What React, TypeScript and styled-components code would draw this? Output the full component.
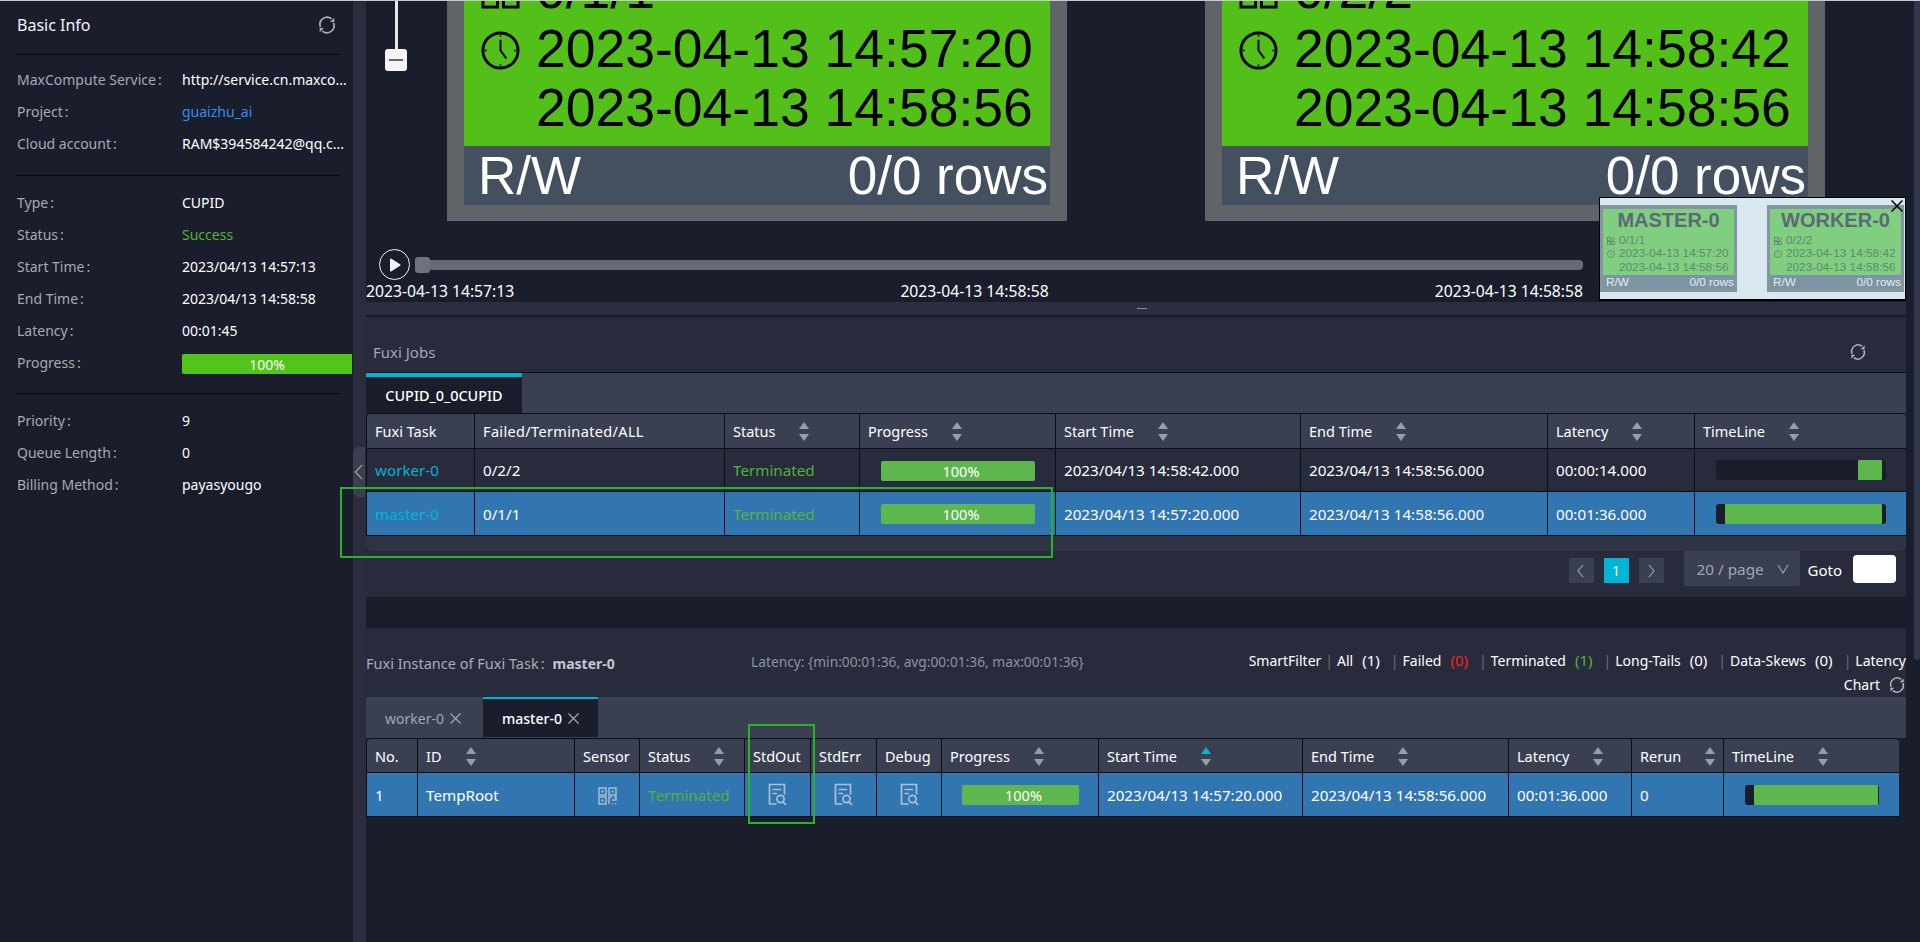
import React from "react";
import styled, { createGlobalStyle } from "styled-components";

const Global = createGlobalStyle`
  html, body { margin: 0; padding: 0; background: #1a1d2b; height: 100%; overflow: hidden; }
  #root { height: 100%; }
  * { box-sizing: border-box; }
  body { font-family: "Noto Sans", "Open Sans", "Liberation Sans", sans-serif; font-size: 14.5px; color: #fff; }
`;

const Page = styled.div`
  display: flex; height: 942px; width: 1920px; overflow: hidden; position: relative;
  background: #1a1d2b; border-top: 1px solid #c9c9c9;
`;

/* ---------- icons ---------- */
const RefreshIcon = ({ size = 18, color = "#b4b6bc" }: { size?: number; color?: string }) => (
  <svg width={size} height={size} viewBox="0 0 24 24" fill="none" stroke={color} strokeWidth="2">
    <path d="M4.2 14.5A8.6 8.6 0 0 1 17.6 4.6" />
    <path d="M19.8 9.5A8.6 8.6 0 0 1 6.4 19.4" />
    <path d="M20.8 3.2v5.2h-5.2z" fill={color} stroke="none" />
    <path d="M3.2 20.8v-5.2h5.2z" fill={color} stroke="none" />
  </svg>
);
const QrIcon = () => (
  <svg width="19" height="18" viewBox="0 0 19 18" fill="none" stroke="#a4bdd4" strokeWidth="1.5" style={{ verticalAlign: "middle" }}>
    <rect x="1" y="1" width="7" height="7" />
    <rect x="11" y="1" width="7" height="7" />
    <rect x="1" y="10" width="7" height="7" />
    <rect x="3.5" y="3.5" width="2" height="2" fill="#a4bdd4" stroke="none" />
    <rect x="13.5" y="3.5" width="2" height="2" fill="#a4bdd4" stroke="none" />
    <rect x="3.5" y="12.5" width="2" height="2" fill="#a4bdd4" stroke="none" />
    <path d="M11 17v-7h3M16 10h2v3h-3v1" />
    <path d="M14 16.8h1.2M17 16.8h1.2" />
  </svg>
);
const DocIcon = () => (
  <svg width="19" height="23" viewBox="0 0 19 23" fill="none" stroke="#a9c1d6" strokeWidth="1.7" style={{ verticalAlign: "middle" }}>
    <path d="M8.5 21H1.5V1.5H16.5V11.5" />
    <path d="M4.5 6.5H13M4.5 10.5H9" />
    <circle cx="12.5" cy="16" r="3.6" />
    <path d="M15 18.8L18 22" />
  </svg>
);
const ClockIcon = ({ size, color }: { size: number; color: string }) => (
  <svg width={size} height={size} viewBox="0 0 40 40" fill="none" stroke={color}>
    <circle cx="20" cy="20" r="18" strokeWidth="3" />
    <path d="M20 9v11l6 8" strokeWidth="2" />
    <path d="M20 4v2M20 34v2M4 20h2M34 20h2" strokeWidth="1.4" />
  </svg>
);
const ClusterIcon = ({ size, color }: { size: number; color: string }) => (
  <svg width={size} height={size} viewBox="0 0 40 40" fill="none" stroke={color} strokeWidth="3">
    <rect x="2" y="2" width="15" height="15" />
    <path d="M30 1l9 9-9 9-9-9z" />
    <rect x="2" y="23" width="15" height="15" />
    <rect x="23" y="23" width="15" height="15" />
  </svg>
);

/* ---------- sidebar ---------- */
const Sidebar = styled.aside`
  width: 353px; flex: none; background: #1a1d2b; padding: 0 14px 0 16px;
`;
const SideTitleBar = styled.div`
  height: 54px; display: flex; align-items: center; justify-content: space-between;
  padding: 0 2px 6px 1px; border-bottom: 1px solid #07080d; font-size: 16px; color: #f2f3f5;
`;
const SideGroup = styled.div<{ $top: number; $bottom: number; $line?: boolean }>`
  padding: ${p => p.$top}px 0 ${p => p.$bottom}px;
  border-bottom: ${p => (p.$line ? "1px solid #07080d" : "none")};
`;
const SideRow = styled.div`
  display: grid; grid-template-columns: 166px 1fr; height: 32px; align-items: center; white-space: nowrap;
  width: 337px; padding-bottom: 2px;
`;
const SideLabel = styled.span`
  color: #a7aab1; padding-left: 1px; font-size: 14px;
`;
const Colon = styled.span`
  margin-left: 2px;
`;
const SideValue = styled.span<{ $color?: string }>`
  color: ${p => p.$color || "#fff"}; font-size: 14px;
`;
const SideBar = styled.div`
  height: 20px; width: 170px; background: #52c41a; border-radius: 2px 0 0 2px; color: #fff; font-size: 14px;
  display: flex; align-items: center; justify-content: center; margin-top: 4px;
`;

const Splitter = styled.div`
  width: 13px; flex: none; background: #2a2d3d; position: relative;
`;
const CollapseTab = styled.div`
  position: absolute; left: 0; top: 446px; width: 12px; height: 50px; background: #3b3e4e;
  border-radius: 6px 0 0 6px; display: flex; align-items: center; justify-content: center;
`;

/* ---------- main ---------- */
const Main = styled.main`
  width: 1540px; flex: none; display: flex; flex-direction: column;
`;
const TopArea = styled.div`
  height: 301px; position: relative; display: flex; flex-direction: column; flex: none;
`;
const Graph = styled.div`
  height: 246px; position: relative; overflow: hidden; flex: none;
`;
const NodeCard = styled.div<{ $left: number }>`
  position: absolute; left: ${p => p.$left}px; bottom: 26px; width: 620px;
  border: solid #5f6468; border-width: 0 17px 16px;
  font-family: "Liberation Sans", Arial, sans-serif;
`;
const NodeBody = styled.div`
  background: #52c018; padding: 0 0 9px 17px; color: #000;
`;
const NodeLine = styled.div`
  height: 59px; display: flex; align-items: center; font-size: 53.5px; line-height: 59px; white-space: nowrap;
`;
const NodeIconSlot = styled.div<{ $dy?: number }>`
  width: 39px; margin-right: 16px; flex: none; display: flex; position: relative; top: ${p => p.$dy || 0}px;
`;
const NodeFoot = styled.div`
  height: 59px; background: #44505f; color: #fff; display: flex; justify-content: space-between; align-items: center;
  font-size: 53px; padding: 0 2px 0 14px; white-space: nowrap;
`;
const ZoomLine = styled.div`
  position: absolute; left: 29px; top: 0; width: 3px; height: 50px; background: #e8e8e8;
`;
const ZoomKnob = styled.div`
  position: absolute; left: 19px; top: 48px; width: 22px; height: 22px; background: #f4f4f4; border-radius: 3px;
  display: flex; align-items: center; justify-content: center;
  &::after { content: ""; width: 14px; height: 2px; background: #666; }
`;
const Timeline = styled.div`
  flex: 1; padding-top: 1px; width: 1217px;
`;
const TimelineRow = styled.div`
  display: flex; align-items: center; padding-left: 13px; gap: 5px; height: 33px;
`;
const PlayButton = styled.div`
  width: 31px; height: 31px; border-radius: 50%; border: 1.5px solid #f0f0f0; display: flex; align-items: center; justify-content: center; flex: none;
`;
const Track = styled.div`
  flex: 1; height: 10px; background: #666a73; border-radius: 0 4px 4px 0; position: relative;
`;
const Thumb = styled.div`
  position: absolute; left: 0; top: -3px; width: 15px; height: 16px; border-radius: 3px; background: #6e727c;
`;
const TimeLabels = styled.div`
  display: flex; justify-content: space-between; font-size: 15.7px; color: #fff; line-height: 20px;
`;

/* minimap */
const MiniMap = styled.div`
  position: absolute; right: 0; bottom: 1px; width: 307px; height: 104px; background: #d8e8ee; border: 1px solid #000;
  border-bottom-width: 2px; overflow: hidden;
  font-family: "Liberation Sans", Arial, sans-serif;
`;
const MiniCard = styled.div<{ $left: number }>`
  position: absolute; left: ${p => p.$left}px; top: 7px; width: 137px; height: 87px;
  border: solid #84979f; border-width: 4px 3px 3px;
  display: flex; flex-direction: column;
`;
const MiniBody = styled.div`
  flex: 1; background: #80cf80; color: #5f8a70; font-size: 11.8px; padding: 0 0 0 4px; white-space: nowrap;
`;
const MiniTitle = styled.div`
  font-size: 20px; font-weight: 700; color: #5c6a78; text-align: center; line-height: 21px; margin: 1px 0 3px -4px;
`;
const MiniLine = styled.div`
  height: 13.3px; line-height: 13.3px; display: flex; align-items: center; gap: 4px;
`;
const MiniSlot = styled.div`
  width: 8px; flex: none; display: flex;
`;
const MiniFoot = styled.div`
  height: 14px; background: #7d94a5; color: #e4ebef; font-size: 11.8px; display: flex; justify-content: space-between;
  padding: 0 0 1px 3px; align-items: center; white-space: nowrap;
`;
const MiniClose = styled.div`
  position: absolute; right: 2px; top: 2px; display: flex;
`;

const DragBar = styled.div`
  height: 13px; flex: none; background: #2a2e3f; display: flex; justify-content: center; align-items: center;
  padding-left: 12px; margin-bottom: 2px;
  &::after { content: ""; width: 10px; height: 1px; background: #8a8d96; }
`;

/* panels */
const JobsPanel = styled.section`
  height: 280px; flex: none; background: #282b3b; display: flex; flex-direction: column;
`;
const PanelHead = styled.div`
  height: 56px; flex: none; display: flex; align-items: center; justify-content: space-between;
  padding: 28px 39px 14px 7px; border-bottom: 1px solid #0c0e15; color: #a3a7b2; font-size: 15px;
`;
const TabStrip = styled.div<{ $h: number }>`
  height: ${p => p.$h}px; flex: none; background: #3a3f52; display: flex; align-items: flex-start;
`;
const JobTab = styled.div`
  width: 156px; height: 40px; background: #1a1d2b; border-top: 4px solid #00b4d8; display: flex; align-items: center;
  justify-content: center; color: #fff; font-size: 14.4px; font-weight: 500; white-space: nowrap;
`;
const InstTab = styled.div<{ $active?: boolean; $w: number }>`
  width: ${p => p.$w}px; height: 40px; background: ${p => (p.$active ? "#1a1d2b" : "transparent")};
  border-top: 2px solid ${p => (p.$active ? "#00b4d8" : "transparent")};
  color: ${p => (p.$active ? "#fff" : "#a3a7b2")}; display: flex; align-items: center; gap: 6px; padding-left: 19px;
  font-size: 14px; font-weight: ${p => (p.$active ? 500 : 400)}; white-space: nowrap;
`;
const TabClose = styled.span`
  color: #a3a7b2; display: flex;
`;
const Table = styled.table<{ $w: number }>`
  width: ${p => p.$w}px; table-layout: fixed; border-collapse: separate; border-spacing: 0; flex: none;
`;
const Th = styled.th<{ $h: number }>`
  height: ${p => p.$h}px; background: #3a3f52; color: #fff; font-weight: 400; text-align: left; padding: 0 0 0 8px; font-size: 14.5px;
  border-right: 1px solid #0c0e15; border-bottom: 1px solid #0c0e15; border-top: 1px solid #0c0e15; white-space: nowrap;
  &:first-child { border-left: 1px solid #0c0e15; border-top-left-radius: 4px; }
  &:last-child { border-right: 0; border-top-right-radius: 4px; }
`;
const HeadInner = styled.div<{ $ls?: number }>`
  display: flex; align-items: center; letter-spacing: ${p => p.$ls || 0}px;
`;
const Td = styled.td<{ $sel?: boolean; $h: number; $color?: string; $center?: boolean }>`
  height: ${p => p.$h}px; background: ${p => (p.$sel ? "#3276b1" : "#282b3b")}; color: ${p => p.$color || "#fff"};
  padding: 0 0 0 ${p => (p.$center ? 0 : 8)}px; border-right: 1px solid #0c0e15; border-bottom: 1px solid #0c0e15; font-size: 15.2px; white-space: nowrap;
  text-align: ${p => (p.$center ? "center" : "left")};
  &:first-child { border-left: 1px solid #0c0e15; }
  &:last-child { border-right: 0; }
`;
const Carets = styled.span`
  display: inline-flex; flex-direction: column; gap: 5px; margin-left: 24px; flex: none; padding-top: 1px;
`;
const CaretUp = styled.i<{ $on?: boolean }>`
  display: block; width: 0; height: 0; border: 5px solid transparent; border-top: 0;
  border-bottom: 7px solid ${p => (p.$on ? "#00b4d8" : "#9a9da6")};
`;
const CaretDown = styled.i`
  display: block; width: 0; height: 0; border: 5px solid transparent; border-bottom: 0; border-top: 7px solid #9a9da6;
`;
const GreenBar = styled.div<{ $w: number; $l: number }>`
  width: ${p => p.$w}px; height: 20px; border-radius: 2px; background: #5eb64e; color: #fff; display: flex; align-items: center; justify-content: center;
  font-size: 14.5px; margin: 1px 0 0 ${p => p.$l}px; padding-left: 6px;
`;
const TrackBar = styled.div<{ $w: number }>`
  width: ${p => p.$w}px; height: 20px; border-radius: 3px; background: #1a1d2b; margin: 0 auto; display: flex; position: relative; left: -4px;
`;
const TrackFill = styled.div`
  background: #5eb64e; height: 100%; border-radius: 1px;
`;
const ScrollStripe = styled.div`
  height: 15px; flex: none; background: #2f3343; border-radius: 0 0 6px 6px;
`;
const Pager = styled.div`
  flex: 1; display: flex; align-items: flex-start; justify-content: flex-end; padding: 0 10px 0 0;
`;
const PageBtn = styled.div<{ $on?: boolean }>`
  width: 25px; height: 25px; margin-top: 7px; margin-right: 10px; background: ${p => (p.$on ? "#00b4d8" : "#3a3f52")}; color: #fff; font-size: 14px;
  display: flex; align-items: center; justify-content: center;
`;
const PageSelect = styled.div`
  width: 116px; height: 35px; margin-left: 10px; background: #3a3f52; color: #a3a7b2; font-size: 15.3px; border-radius: 2px;
  display: flex; align-items: center; justify-content: space-between; padding: 0 10px 0 13px; white-space: nowrap;
`;
const GotoLabel = styled.span`
  margin: 7px 11px 0 8px; color: #fff; font-size: 15px; line-height: 24px;
`;
const GotoInput = styled.div`
  width: 43px; height: 28px; margin-top: 4px; background: #fff; border-radius: 4px;
`;
const PanelGap = styled.div`
  height: 31px; flex: none;
`;
const InstHead = styled.div`
  height: 69px; flex: none; background: #282b3b; display: flex; align-items: flex-start; position: relative;
`;
const InstTitle = styled.div`
  width: 385px; flex: none; padding-top: 25px; color: #a9adb7; font-size: 14.5px; white-space: nowrap; line-height: 20px;
  b { font-weight: 700; color: #c4c7ce; margin-left: 8px; font-size: 14px; }
`;
const LatencyNote = styled.div`
  padding-top: 24px; color: #8d93a1; font-size: 13.75px; white-space: nowrap; line-height: 20px;
`;
const FilterBar = styled.div`
  margin-left: auto; width: 680px; padding-top: 20px; text-align: right; font-size: 14px; line-height: 24px; color: #fff;
`;
const Sep = styled.span`
  color: #6a6e7a; margin: 0 4px;
`;
const Count = styled.span<{ $color?: string }>`
  color: ${p => p.$color || "#fff"}; margin: 0 7px 0 9px; font-size: 15px;
`;
const FilterRefresh = styled.span`
  display: inline-block; vertical-align: -4px; margin-left: 8px;
`;
const Annotation = styled.div<{ $l: number; $t: number; $w: number; $h: number }>`
  position: absolute; left: ${p => p.$l}px; top: ${p => p.$t}px; width: ${p => p.$w}px; height: ${p => p.$h}px;
  border: 2px solid #28b428; pointer-events: none;
`;
const ScrollThumb = styled.div`
  position: absolute; right: 0; top: -1px; width: 6px; height: 660px; background: #32364a; border-radius: 3px;
`;
const ColDef = styled.col<{ $w: number }>`
  width: ${p => p.$w}px;
`;

/* ---------- data ---------- */
const nodes = [
  { left: 81, stat: "0/1/1", a: "2023-04-13 14:57:20", b: "2023-04-13 14:58:56" },
  { left: 839, stat: "0/2/2", a: "2023-04-13 14:58:42", b: "2023-04-13 14:58:56" },
];
const mini = [
  { left: 0, name: "MASTER-0", stat: "0/1/1", a: "2023-04-13 14:57:20", b: "2023-04-13 14:58:56" },
  { left: 167, name: "WORKER-0", stat: "0/2/2", a: "2023-04-13 14:58:42", b: "2023-04-13 14:58:56" },
];
const side1 = [
  ["MaxCompute Service", "http://service.cn.maxco..."],
  ["Project", "guaizhu_ai", "#2f8fef"],
  ["Cloud account", "RAM$394584242@qq.c..."],
];
const side2 = [
  ["Type", "CUPID"],
  ["Status", "Success", "#52b33a"],
  ["Start Time", "2023/04/13 14:57:13"],
  ["End Time", "2023/04/13 14:58:58"],
  ["Latency", "00:01:45"],
];
const side3 = [
  ["Priority", "9"],
  ["Queue Length", "0"],
  ["Billing Method", "payasyougo"],
];

const jobCols = [109, 250, 135, 196, 245, 247, 147, 211];
const instCols = [52, 157, 65, 105, 66, 66, 65, 157, 204, 206, 123, 92, 175];

const Sort = ({ on }: { on?: boolean }) => (
  <Carets>
    <CaretUp $on={on} />
    <CaretDown />
  </Carets>
);
const Head = ({ t, sort, on, h, ls }: { t: string; sort?: boolean; on?: boolean; h: number; ls?: number }) => (
  <Th $h={h}>
    <HeadInner $ls={ls}>
      {t}
      {sort && <Sort on={on} />}
    </HeadInner>
  </Th>
);
const SideRows = ({ rows }: { rows: string[][] }) => (
  <>
    {rows.map(r => (
      <SideRow key={r[0]}>
        <SideLabel>{r[0]}<Colon>:</Colon></SideLabel>
        <SideValue $color={r[2]}>{r[1]}</SideValue>
      </SideRow>
    ))}
  </>
);
const Chev = ({ d, color = "#a3a7b2", w = 10, h = 16 }: { d: string; color?: string; w?: number; h?: number }) => (
  <svg width={w} height={h} viewBox="0 0 10 16" fill="none" stroke={color} strokeWidth="1.1">
    <path d={d} />
  </svg>
);
const SmallX = ({ size = 11, color = "#a3a7b2", sw = 1.2 }: { size?: number; color?: string; sw?: number }) => (
  <svg width={size} height={size} viewBox="0 0 11 11" fill="none" stroke={color} strokeWidth={sw}>
    <path d="M0.5 0.5L10.5 10.5M10.5 0.5L0.5 10.5" />
  </svg>
);

const TERM = "#52b33a";

export default function App() {
  return (
    <Page>
      <Global />
      <Sidebar>
        <SideTitleBar>
          Basic Info
          <RefreshIcon size={20} color="#a9acb3" />
        </SideTitleBar>
        <SideGroup $top={9} $bottom={15} $line>
          <SideRows rows={side1} />
        </SideGroup>
        <SideGroup $top={11} $bottom={14} $line>
          <SideRows rows={side2} />
          <SideRow>
            <SideLabel>Progress<Colon>:</Colon></SideLabel>
            <SideBar>100%</SideBar>
          </SideRow>
        </SideGroup>
        <SideGroup $top={11} $bottom={0}>
          <SideRows rows={side3} />
        </SideGroup>
      </Sidebar>
      <Splitter>
        <CollapseTab>
          <Chev d="M8 1L1.5 8L8 15" color="#b9bcc4" />
        </CollapseTab>
      </Splitter>
      <Main>
        <TopArea>
          <Graph>
            {nodes.map(n => (
              <NodeCard key={n.left} $left={n.left}>
                <NodeBody>
                  <NodeLine>
                    <NodeIconSlot>
                      <ClusterIcon size={39} color="#000" />
                    </NodeIconSlot>
                    {n.stat}
                  </NodeLine>
                  <NodeLine>
                    <NodeIconSlot $dy={2}>
                      <ClockIcon size={39} color="#000" />
                    </NodeIconSlot>
                    {n.a}
                  </NodeLine>
                  <NodeLine>
                    <NodeIconSlot />
                    {n.b}
                  </NodeLine>
                </NodeBody>
                <NodeFoot>
                  <span>R/W</span>
                  <span>0/0 rows</span>
                </NodeFoot>
              </NodeCard>
            ))}
            <ZoomLine />
            <ZoomKnob />
          </Graph>
          <Timeline>
            <TimelineRow>
              <PlayButton>
                <svg width="12" height="14" viewBox="0 0 12 14">
                  <path d="M2 1.5L10.5 7L2 12.5Z" fill="#f4f4f4" stroke="#f4f4f4" strokeWidth="2" strokeLinejoin="round" />
                </svg>
              </PlayButton>
              <Track>
                <Thumb />
              </Track>
            </TimelineRow>
            <TimeLabels>
              <span>2023-04-13 14:57:13</span>
              <span>2023-04-13 14:58:58</span>
              <span>2023-04-13 14:58:58</span>
            </TimeLabels>
          </Timeline>
          <MiniMap>
            {mini.map(n => (
              <MiniCard key={n.left} $left={n.left}>
                <MiniBody>
                  <MiniTitle>{n.name}</MiniTitle>
                  <MiniLine>
                    <MiniSlot>
                      <ClusterIcon size={8} color="#5c6a78" />
                    </MiniSlot>
                    {n.stat}
                  </MiniLine>
                  <MiniLine>
                    <MiniSlot>
                      <ClockIcon size={8} color="#5c6a78" />
                    </MiniSlot>
                    {n.a}
                  </MiniLine>
                  <MiniLine>
                    <MiniSlot />
                    {n.b}
                  </MiniLine>
                </MiniBody>
                <MiniFoot>
                  <span>R/W</span>
                  <span>0/0 rows</span>
                </MiniFoot>
              </MiniCard>
            ))}
            <MiniClose>
              <SmallX size={12} color="#000" sw={1.4} />
            </MiniClose>
          </MiniMap>
        </TopArea>
        <DragBar />
        <JobsPanel>
          <PanelHead>
            Fuxi Jobs
            <RefreshIcon size={18} color="#b4b6bc" />
          </PanelHead>
          <TabStrip $h={40}>
            <JobTab>CUPID_0_0CUPID</JobTab>
          </TabStrip>
          <Table $w={1540}>
            <colgroup>
              {jobCols.map((w, i) => (
                <ColDef key={i} $w={w} />
              ))}
            </colgroup>
            <thead>
              <tr>
                <Head h={36} t="Fuxi Task" />
                <Head h={36} t="Failed/Terminated/ALL" ls={0.35} />
                <Head h={36} t="Status" sort />
                <Head h={36} t="Progress" sort />
                <Head h={36} t="Start Time" sort />
                <Head h={36} t="End Time" sort />
                <Head h={36} t="Latency" sort />
                <Head h={36} t="TimeLine" sort />
              </tr>
            </thead>
            <tbody>
              <tr>
                <Td $h={43} $color="#00b4d8">worker-0</Td>
                <Td $h={43}>0/2/2</Td>
                <Td $h={43} $color={TERM}>Terminated</Td>
                <Td $h={43}><GreenBar $w={154} $l={13}>100%</GreenBar></Td>
                <Td $h={43}>2023/04/13 14:58:42.000</Td>
                <Td $h={43}>2023/04/13 14:58:56.000</Td>
                <Td $h={43}>00:00:14.000</Td>
                <Td $h={43}>
                  <TrackBar $w={170}>
                    <TrackFill style={{ marginLeft: 142, width: 24 }} />
                  </TrackBar>
                </Td>
              </tr>
              <tr>
                <Td $sel $h={44} $color="#00b4d8">master-0</Td>
                <Td $sel $h={44}>0/1/1</Td>
                <Td $sel $h={44} $color={TERM}>Terminated</Td>
                <Td $sel $h={44}><GreenBar $w={154} $l={13}>100%</GreenBar></Td>
                <Td $sel $h={44}>2023/04/13 14:57:20.000</Td>
                <Td $sel $h={44}>2023/04/13 14:58:56.000</Td>
                <Td $sel $h={44}>00:01:36.000</Td>
                <Td $sel $h={44}>
                  <TrackBar $w={170}>
                    <TrackFill style={{ marginLeft: 9, width: 157 }} />
                  </TrackBar>
                </Td>
              </tr>
            </tbody>
          </Table>
          <ScrollStripe />
          <Pager>
            <PageBtn>
              <Chev d="M7 2L2 8L7 14" />
            </PageBtn>
            <PageBtn $on>1</PageBtn>
            <PageBtn>
              <Chev d="M3 2L8 8L3 14" />
            </PageBtn>
            <PageSelect>
              20 / page
              <Chev d="M0 4L5 12L10 4" w={14} h={16} />
            </PageSelect>
            <GotoLabel>Goto</GotoLabel>
            <GotoInput />
          </Pager>
        </JobsPanel>
        <PanelGap />
        <InstHead>
          <InstTitle>
            Fuxi Instance of Fuxi Task<Colon>:</Colon><b>master-0</b>
          </InstTitle>
          <LatencyNote>Latency: {"{"}min:00:01:36, avg:00:01:36, max:00:01:36{"}"}</LatencyNote>
          <FilterBar>
            SmartFilter<Sep>|</Sep>All<Count>(1)</Count>
            <Sep>|</Sep>Failed<Count $color="#ff2020">(0)</Count>
            <Sep>|</Sep>Terminated<Count $color={TERM}>(1)</Count>
            <Sep>|</Sep>Long-Tails<Count>(0)</Count>
            <Sep>|</Sep>Data-Skews<Count>(0)</Count>
            <Sep>|</Sep>Latency Chart
            <FilterRefresh>
              <RefreshIcon size={18} />
            </FilterRefresh>
          </FilterBar>
        </InstHead>
        <TabStrip $h={41}>
          <InstTab $w={117}>
            worker-0
            <TabClose><SmallX /></TabClose>
          </InstTab>
          <InstTab $w={115} $active>
            master-0
            <TabClose><SmallX /></TabClose>
          </InstTab>
        </TabStrip>
        <Table $w={1533}>
          <colgroup>
            {instCols.map((w, i) => (
              <ColDef key={i} $w={w} />
            ))}
          </colgroup>
          <thead>
            <tr>
              <Head h={35} t="No." />
              <Head h={35} t="ID" sort />
              <Head h={35} t="Sensor" />
              <Head h={35} t="Status" sort />
              <Head h={35} t="StdOut" />
              <Head h={35} t="StdErr" />
              <Head h={35} t="Debug" />
              <Head h={35} t="Progress" sort />
              <Head h={35} t="Start Time" sort on />
              <Head h={35} t="End Time" sort />
              <Head h={35} t="Latency" sort />
              <Head h={35} t="Rerun" sort />
              <Head h={35} t="TimeLine" sort />
            </tr>
          </thead>
          <tbody>
            <tr>
              <Td $sel $h={44}>1</Td>
              <Td $sel $h={44}>TempRoot</Td>
              <Td $sel $h={44} $center><QrIcon /></Td>
              <Td $sel $h={44} $color={TERM}>Terminated</Td>
              <Td $sel $h={44} $center><DocIcon /></Td>
              <Td $sel $h={44} $center><DocIcon /></Td>
              <Td $sel $h={44} $center><DocIcon /></Td>
              <Td $sel $h={44}><GreenBar $w={117} $l={12}>100%</GreenBar></Td>
              <Td $sel $h={44}>2023/04/13 14:57:20.000</Td>
              <Td $sel $h={44}>2023/04/13 14:58:56.000</Td>
              <Td $sel $h={44}>00:01:36.000</Td>
              <Td $sel $h={44}>0</Td>
              <Td $sel $h={44}>
                <TrackBar $w={134}>
                  <TrackFill style={{ marginLeft: 9, width: 124 }} />
                </TrackBar>
              </Td>
            </tr>
          </tbody>
        </Table>
      </Main>
      <Annotation $l={340} $t={486} $w={713} $h={71} />
      <Annotation $l={748} $t={723} $w={67} $h={100} />
      <ScrollThumb />
    </Page>
  );
}
